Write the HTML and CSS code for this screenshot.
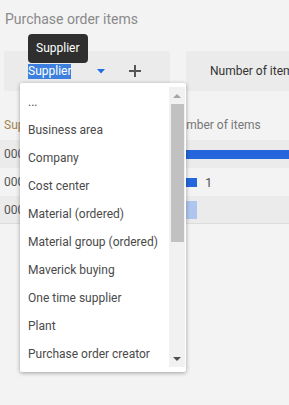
FILE: index.html
```html
<!DOCTYPE html>
<html>
<head>
  <title>Purchase order items</title>
  <meta charset="utf-8">
  <link rel="stylesheet" href="styles.css">
</head>
<body>
  <div class="page">
    <div class="title">Purchase order items</div>

    <div class="toolbar">
      <div class="slot slot-dim">
        <span class="dim-name">Supplier</span>
        <svg class="caret" width="8" height="5" viewBox="0 0 8 5"><path d="M0 0h8L4 4.5z" fill="#1f6fe0"/></svg>
        <svg class="plus" width="12" height="12" viewBox="0 0 12 12"><path d="M6 0v12M0 6h12" stroke="#555" stroke-width="2"/></svg>

        <div class="tooltip">Supplier</div>

        <div class="dropdown">
          <ul class="options">
            <li>...</li>
            <li>Business area</li>
            <li>Company</li>
            <li>Cost center</li>
            <li>Material (ordered)</li>
            <li>Material group (ordered)</li>
            <li>Maverick buying</li>
            <li>One time supplier</li>
            <li>Plant</li>
            <li>Purchase order creator</li>
          </ul>
          <div class="scrollbar">
            <div class="sb-btn"><span class="arrow-up"></span></div>
            <div class="sb-track"><div class="sb-thumb"></div></div>
            <div class="sb-btn"><span class="arrow-down"></span></div>
          </div>
        </div>
      </div>
      <div class="slot slot-measure">Number of items</div>
    </div>

    <div class="table">
      <div class="row head">
        <div class="col-dim sorted">Supplier</div>
        <div class="col-val">Number of items</div>
      </div>
      <div class="row alt">
        <div class="col-dim">000</div>
        <div class="col-val"><span class="bar" style="width:140px"></span></div>
      </div>
      <div class="row">
        <div class="col-dim">000</div>
        <div class="col-val"><span class="bar" style="width:26px"></span><span class="num">1</span></div>
      </div>
      <div class="row alt last">
        <div class="col-dim">000</div>
        <div class="col-val"><span class="bar bar-light" style="width:26px"></span></div>
      </div>
    </div>
  </div>
</body>
</html>
```

FILE: styles.css
```css
* {box-sizing: border-box;}

html {
  height: 100%;
  background-color: #f3f3f3;
}

body {
  margin: 0;
  height: 100%;
  background-color: #f3f3f3;
  font-family: Roboto, "Liberation Sans", Arial, sans-serif;
  overflow: hidden;
}

.page {
  height: 405px;
  overflow: hidden;
}

.title {
  padding: 11px 5px 0;
  font-size: 14px;
  line-height: 16px;
  color: #8a8a8a;
}

.toolbar {
  display: flex;
  gap: 16px;
  margin-top: 24px;
  padding-left: 4px;
  width: 400px;
}

.slot {
  height: 40px;
  background-color: #ebebeb;
  border-radius: 2px;
  display: flex;
  align-items: center;
  font-size: 12px;
  color: #333;
}

.slot-dim {
  position: relative;
  width: 166px;
  padding-left: 24px;
}

.slot-measure {
  flex: 1;
  padding-left: 24px;
}

.dim-name {
  background-color: #3d7fde;
  color: white;
  line-height: 15px;
}

.caret {
  margin-left: 26px;
}

.plus {
  margin-left: 24px;
}

.tooltip {
  position: absolute;
  left: 24px;
  top: -17px;
  width: 60px;
  height: 29px;
  line-height: 29px;
  padding-left: 8px;
  background-color: #2f2f2f;
  color: white;
  font-size: 12px;
  border-radius: 4px;
  z-index: 5;
}

.dropdown {
  position: absolute;
  left: 16px;
  top: 32px;
  width: 166px;
  height: 289px;
  padding: 4px 1px 5px 0;
  background-color: white;
  border-radius: 2px;
  box-shadow: 0 1px 4px rgba(0, 0, 0, 0.35);
  display: flex;
  z-index: 4;
}

.options {
  flex: 1;
  list-style: none;
  margin: 0;
  padding: 1px 0 0 8px;
  overflow: hidden;
}

.options li {
  height: 28px;
  line-height: 28px;
  font-size: 12px;
  color: #4a4a4a;
  white-space: nowrap;
}

.scrollbar {
  width: 16px;
  background-color: #f1f1f1;
  display: flex;
  flex-direction: column;
}

.sb-btn {
  height: 17px;
  display: flex;
  align-items: center;
  justify-content: center;
}

.arrow-up {
  border-left: 4px solid transparent;
  border-right: 4px solid transparent;
  border-bottom: 4px solid #a3a3a3;
}

.arrow-down {
  border-left: 4px solid transparent;
  border-right: 4px solid transparent;
  border-top: 4px solid #505050;
}

.sb-track {
  flex: 1;
  padding: 0 1px 0 2px;
}

.sb-thumb {
  height: 138px;
  background-color: #c1c1c1;
}

.table {
  margin-top: 19px;
  width: 420px;
}

.row {
  display: flex;
  align-items: center;
  height: 28px;
  font-size: 12px;
  color: #555;
}

.row.head {
  height: 30px;
  color: #777;
}

.row.alt {
  background-color: #ebebeb;
}

.row.last {
  border-bottom: 1px solid #dcdcdc;
}

.col-dim {
  width: 171px;
  padding-left: 4px;
}

.sorted {
  color: #a2844f;
}

.col-val {
  flex: 1;
  display: flex;
  align-items: center;
}

.bar {
  display: inline-block;
  height: 9px;
  background-color: #2566dd;
}

.bar-light {
  height: 18px;
  background-color: #aec6ee;
}

.num {
  margin-left: 8px;
  font-size: 13px;
  color: #555;
}
```
